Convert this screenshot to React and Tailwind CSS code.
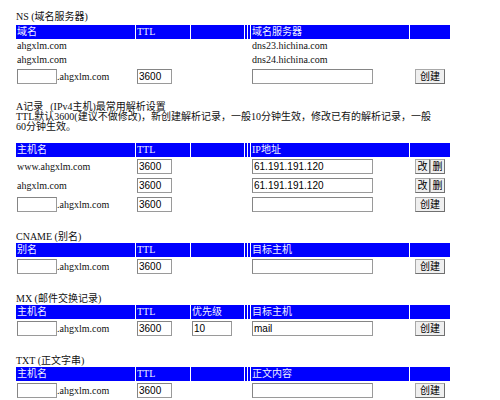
import React from "react";

const GRID = "grid grid-cols-[119px_54px_53px_2px_2px_158px_40px] gap-x-px";
const SANS = "font-['Liberation_Sans','Noto_Sans_CJK_SC',sans-serif]";

function Header({ cols }) {
  return (
    <div className={`${GRID} h-[14px]`}>
      {cols.map((c, i) => (
        <div
          key={i}
          className="bg-[#0000ff] text-[#f0f0ff] text-[10px] leading-[14px] pl-[1px] overflow-hidden whitespace-nowrap"
        >
          {c}
        </div>
      ))}
    </div>
  );
}

function Inp({ className, value }) {
  return (
    <input
      readOnly
      value={value || ""}
      className={`${className} h-[15px] border border-[#9a9a9a] border-t-[#858585] border-l-[#858585] bg-white px-[1px] text-[10px] leading-[13px] text-black outline-none ${SANS}`}
    />
  );
}

function Btn({ children, className }) {
  return (
    <button
      className={`${className} h-[15px] border border-[#a8a8a8] border-b-[#707070] border-r-[#707070] bg-[#efefef] text-[10px] leading-[13px] text-black p-0 ${SANS}`}
    >
      {children}
    </button>
  );
}

function TextRow({ a, b }) {
  return (
    <div className={`${GRID} h-[14px] text-[10px] leading-[14px]`}>
      <div className="pl-[1px] whitespace-nowrap">{a}</div>
      <div></div>
      <div></div>
      <div></div>
      <div></div>
      <div className="pl-[1px] whitespace-nowrap">{b}</div>
      <div></div>
    </div>
  );
}

function InputRow({ first, ttl = "3600", prio, target, edit }) {
  return (
    <div className={`${GRID} h-[19px] items-center text-[10px]`}>
      <div className="pl-[1px] flex items-center whitespace-nowrap">
        {first ? (
          <span className="leading-[15px]">{first}</span>
        ) : (
          <>
            <Inp className="w-[40px]" />
            <span className="leading-[15px]">.ahgxlm.com</span>
          </>
        )}
      </div>
      <div className="pl-[1px] flex items-center">
        <Inp className="w-[35px]" value={ttl} />
      </div>
      <div className="pl-[1px] flex items-center">
        {prio !== undefined ? <Inp className="w-[40px]" value={prio} /> : null}
      </div>
      <div></div>
      <div></div>
      <div className="pl-[1px] flex items-center">
        <Inp className="w-[121px]" value={target} />
      </div>
      <div className="flex justify-center items-center">
        {edit ? (
          <>
            <Btn className="w-[15px]">改</Btn>
            <Btn className="w-[15px]">删</Btn>
          </>
        ) : (
          <Btn className="w-[30px]">创建</Btn>
        )}
      </div>
    </div>
  );
}

export default function App() {
  return (
    <div className="w-[500px] h-[400px] overflow-hidden bg-white text-[#111] font-['Liberation_Serif','Noto_Sans_CJK_SC',serif] text-[10px] pt-[12px] pl-[16px]">
      {/* NS */}
      <div className="leading-[10px] h-[10px] mb-[3px] whitespace-nowrap">NS (域名服务器)</div>
      <Header cols={["域名", "TTL", "", "", "", "域名服务器", ""]} />
      <TextRow a="ahgxlm.com" b="dns23.hichina.com" />
      <TextRow a="ahgxlm.com" b="dns24.hichina.com" />
      <InputRow />

      {/* A */}
      <div className="mt-[16px] mb-[11px] leading-[10px] whitespace-nowrap">
        <div className="flex">
          <span>A记录</span>
          <span className="ml-[7px]">(IPv4主机)最常用解析设置</span>
        </div>
        <div>TTL默认3600(建议不做修改)，新创建解析记录，一般10分钟生效，修改已有的解析记录，一般</div>
        <div>60分钟生效。</div>
      </div>
      <Header cols={["主机名", "TTL", "", "", "", "IP地址", ""]} />
      <InputRow first="www.ahgxlm.com" target="61.191.191.120" edit />
      <InputRow first="ahgxlm.com" target="61.191.191.120" edit />
      <InputRow />

      {/* CNAME */}
      <div className="mt-[18px] mb-[1px] leading-[10px] h-[10px] whitespace-nowrap">CNAME (别名)</div>
      <Header cols={["别名", "TTL", "", "", "", "目标主机", ""]} />
      <InputRow />

      {/* MX */}
      <div className="mt-[18px] mb-[1px] leading-[10px] h-[10px] whitespace-nowrap">MX (邮件交换记录)</div>
      <Header cols={["主机名", "TTL", "优先级", "", "", "目标主机", ""]} />
      <InputRow prio="10" target="mail" />

      {/* TXT */}
      <div className="mt-[18px] mb-[1px] leading-[10px] h-[10px] whitespace-nowrap">TXT (正文字串)</div>
      <Header cols={["主机名", "TTL", "", "", "", "正文内容", ""]} />
      <InputRow />
    </div>
  );
}
